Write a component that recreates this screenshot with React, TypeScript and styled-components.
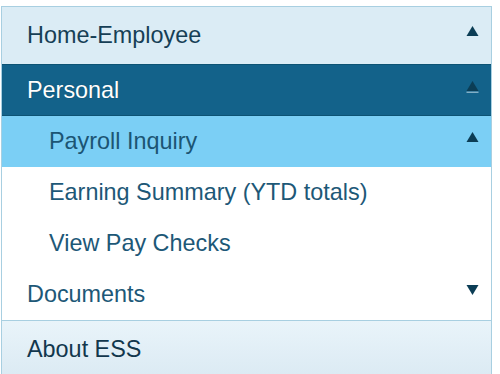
import styled, { createGlobalStyle } from "styled-components"

const GlobalStyle = createGlobalStyle`
  html, body {
    margin: 0;
    padding: 0;
    background: #ffffff;
    font-family: "Liberation Sans", Arial, sans-serif;
  }
`

type Tone = "header" | "active" | "selected" | "plain" | "footer"

const backgrounds: Record<Tone, string> = {
    header: "#dbecf5",
    active: "#13628a",
    selected: "#7bcff5",
    plain: "#ffffff",
    footer: "linear-gradient(#e9f4fa, #dbeaf3)",
}

const colors: Record<Tone, string> = {
    header: "#163f56",
    active: "#ffffff",
    selected: "#1b5573",
    plain: "#1d5877",
    footer: "#12374d",
}

const Arrow = ({ down, glow }: { down?: boolean, glow?: boolean }) => (
    <ArrowBox>
        <svg width="13" height="13" viewBox="0 0 13 13">
            {down
                ? <polygon points="0.5,1 12.5,1 6.5,11" fill="#0b3d55" />
                : <polygon points="6.5,1 12.5,11 0.5,11" fill="#0b3d55" />}
            {glow && <rect x="0.5" y="11.6" width="12" height="1.3" fill="#8fb9cd" />}
        </svg>
    </ArrowBox>
)

const App = () => {
    return (
        <>
            <GlobalStyle />
            <Menu>
                <Row tone="header" tall>
                    <Label>Home-Employee</Label>
                    <Arrow />
                </Row>
                <Row tone="active">
                    <Label>Personal</Label>
                    <Arrow glow />
                </Row>
                <Row tone="selected" sub>
                    <Label>Payroll Inquiry</Label>
                    <Arrow />
                </Row>
                <Row tone="plain" sub>
                    <Label>Earning Summary (YTD totals)</Label>
                </Row>
                <Row tone="plain" sub>
                    <Label>View Pay Checks</Label>
                </Row>
                <Row tone="plain">
                    <Label>Documents</Label>
                    <Arrow down />
                </Row>
                <Row tone="footer" tall>
                    <Label>About ESS</Label>
                </Row>
            </Menu>
        </>
    )
}

const Menu = styled.nav`
  margin: 6px 8px 0 1px;
  border: 1px solid #a8cfe1;
  border-bottom: none;
  display: flex;
  flex-direction: column;
`

const Row = styled.div<{ tone: Tone, sub?: boolean, tall?: boolean }>`
  display: flex;
  align-items: center;
  justify-content: space-between;
  box-sizing: border-box;
  height: ${p => p.tall ? "57px" : p.tone === "active" ? "52px" : "51px"};
  padding: 0 12px 0 ${p => p.sub ? "47px" : "25px"};
  background: ${p => backgrounds[p.tone]};
  color: ${p => colors[p.tone]};
  font-size: 23.4px;
  ${p => p.tone === "active" && `
    border-top: 1px solid #0d5374;
    border-bottom: 1px solid #0d5374;
    text-shadow: 0 0 1px rgba(0, 0, 0, 0.35);
  `}
  ${p => p.tone === "footer" && `
    border-top: 1px solid #a8cfe1;
  `}
`

const Label = styled.span`
  white-space: nowrap;
`

const ArrowBox = styled.span`
  display: flex;
  margin-top: -8px;
`

export default App
